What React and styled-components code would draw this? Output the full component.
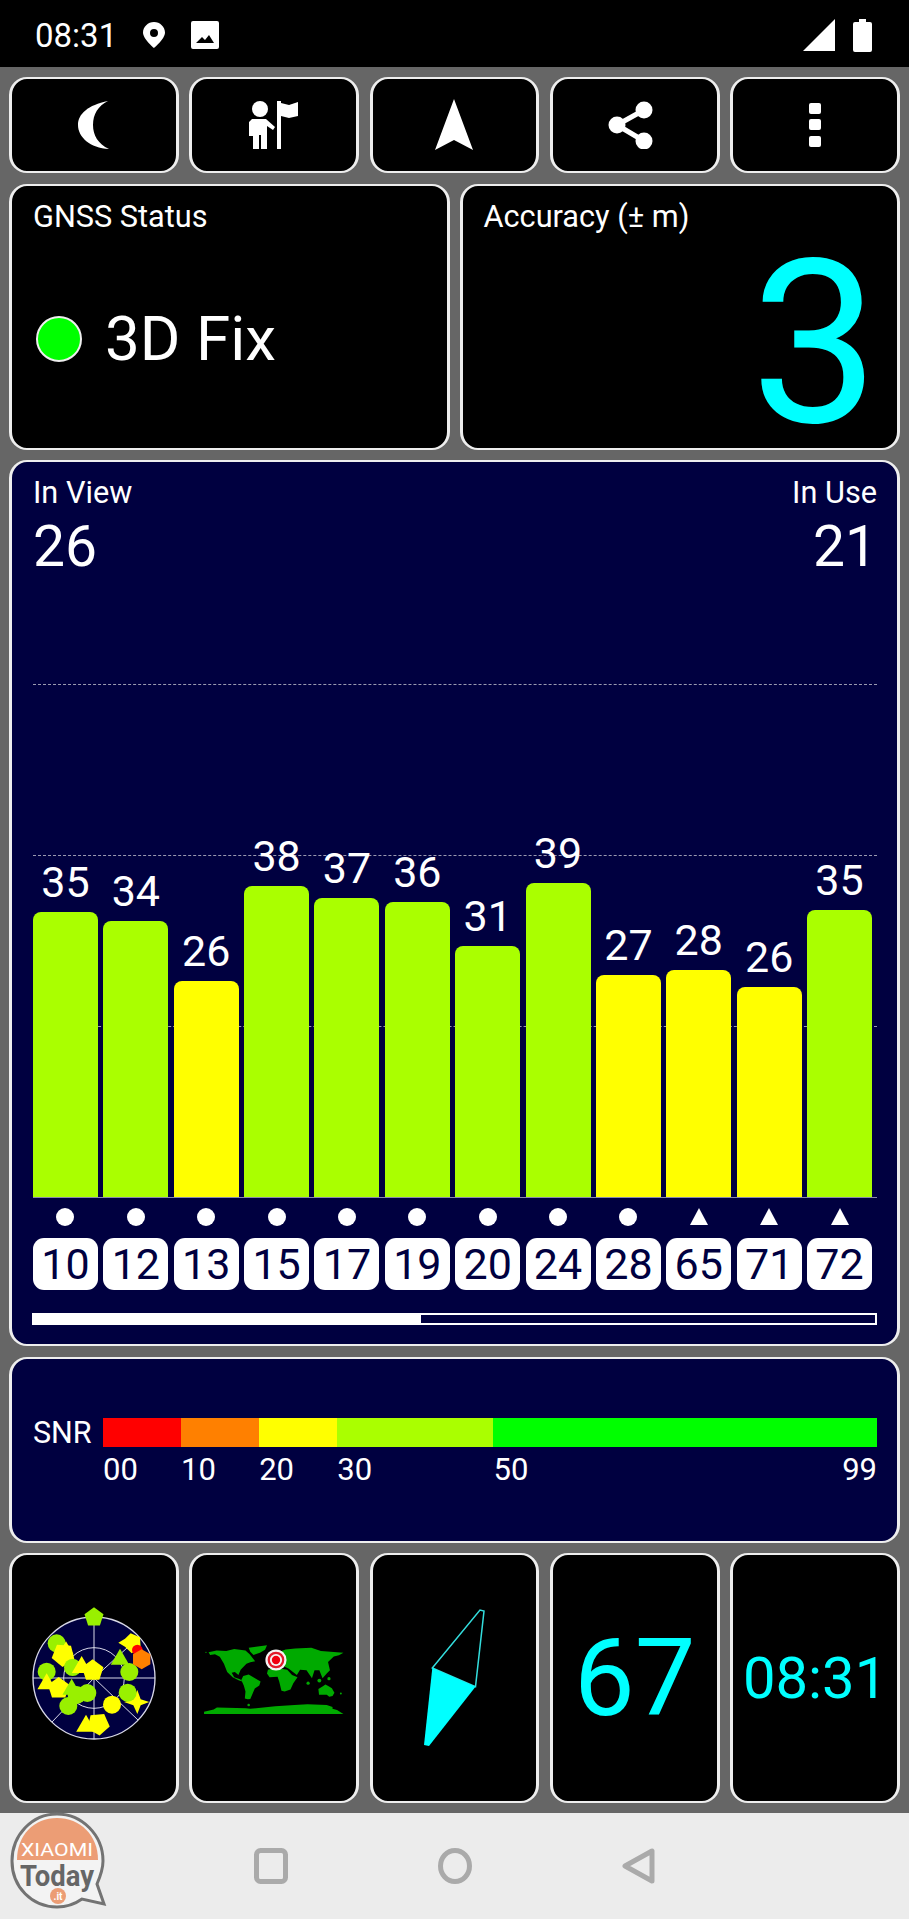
import React from "react";
import styled, { createGlobalStyle } from "styled-components";

const Global = createGlobalStyle`
  html, body { margin: 0; padding: 0; background: #666; }
  body { font-family: Roboto, "Liberation Sans", sans-serif; color: #fff; }
  * { box-sizing: border-box; }
`;

const Page = styled.div`
  width: 909px;
  height: 1919px;
  background: #666;
  display: flex;
  flex-direction: column;
  overflow: hidden;
  position: relative;
`;

const StatusBar = styled.header`
  height: 67px;
  background: #000;
  display: flex;
  align-items: center;
  padding: 3px 37px 0 35px;
`;
const Clock = styled.span`
  font-size: 33px;
  width: 108px;
`;
const StatusIcon = styled.svg`
  display: block;
  margin-right: ${(p) => p.$mr || 0}px;
  flex: none;
`;
const Spacer = styled.div`
  flex: 1;
`;

const Main = styled.main`
  flex: 1;
  display: flex;
  flex-direction: column;
  gap: 10.5px;
  padding: 10px 9px;
`;
const Row = styled.div`
  display: grid;
  grid-template-columns: repeat(${(p) => p.$cols}, 1fr);
  grid-template-rows: ${(p) => p.$h}px;
  gap: ${(p) => p.$gap}px;
  height: ${(p) => p.$h}px;
`;
const Panel = styled.section`
  border-style: solid;
  border-color: #eeeeee;
  border-width: 2px 3px;
  border-radius: 18px;
  background: ${(p) => (p.$navy ? "#000040" : "#000")};
  min-width: 0;
`;
const IconPanel = styled(Panel)`
  display: flex;
  align-items: center;
  justify-content: center;
`;
const TextTile = styled(IconPanel)`
  color: #00ffff;
  font-size: ${(p) => p.$size}px;
  line-height: 1;
`;

const CardLabel = styled.div`
  font-size: 30.7px;
  line-height: 34px;
`;
const StatusCard = styled(Panel)`
  padding: 14px 21px 0;
  display: flex;
  flex-direction: column;
`;
const FixRow = styled.div`
  display: flex;
  align-items: center;
  margin-top: 69px;
  margin-left: 3px;
`;
const FixDot = styled.span`
  width: 46px;
  height: 46px;
  border-radius: 50%;
  background: #00ff00;
  border: 2px solid #eee;
  flex: none;
`;
const FixText = styled.span`
  font-size: 62px;
  line-height: 72px;
  margin-left: 23px;
`;
const AccuracyCard = styled(StatusCard)`
  padding-right: 18px;
`;
const AccuracyValue = styled.div`
  color: #00ffff;
  font-size: 228px;
  line-height: 190px;
  text-align: right;
  margin-top: 15px;
`;

const ChartPanel = styled(Panel)`
  height: 886px;
  padding: 14px 20px 0 21px;
  display: flex;
  flex-direction: column;
`;
const ChartHead = styled.div`
  display: flex;
  justify-content: space-between;
`;
const HeadRight = styled.div`
  text-align: right;
`;
const HeadValue = styled.div`
  font-size: 57px;
  line-height: 60px;
  margin-top: 7px;
`;
const Plot = styled.div`
  position: relative;
  margin-top: 24px;
  height: 597px;
  border-bottom: 1px solid #8a8aa8;
`;
const GridLine = styled.div`
  position: absolute;
  left: 0;
  right: 0;
  top: ${(p) => p.$top}px;
  border-top: 1px dashed #9a9ab0;
`;
const Columns = styled.div`
  display: grid;
  grid-template-columns: repeat(12, 1fr);
  column-gap: 5.4px;
  padding-right: 5px;
`;
const BarColumns = styled(Columns)`
  position: relative;
  height: 100%;
  align-items: end;
`;
const BarCol = styled.div`
  display: flex;
  flex-direction: column;
  align-items: center;
`;
const BarValue = styled.div`
  font-size: 43px;
  line-height: 48px;
  margin-bottom: 6px;
`;
const Bar = styled.div`
  width: 100%;
  background: ${(p) => p.$color};
  border-radius: 8px 8px 0 0;
`;
const SymbolRow = styled(Columns)`
  margin-top: 10px;
  height: 18px;
  justify-items: center;
`;
const Dot = styled.span`
  width: 18px;
  height: 18px;
  border-radius: 50%;
  background: #fff;
`;
const Tri = styled.span`
  width: 0;
  height: 0;
  border-left: 9px solid transparent;
  border-right: 9px solid transparent;
  border-bottom: 17px solid #fff;
`;
const ChipRow = styled(Columns)`
  margin-top: 12px;
`;
const Chip = styled.div`
  height: 52px;
  border-radius: 11px;
  background: #fff;
  color: #000040;
  font-size: 43px;
  line-height: 52px;
  text-align: center;
`;
const Progress = styled.div`
  margin-top: 23px;
  margin-left: -1px;
  height: 12px;
  border: 2px solid #fff;
  background: #000040;
`;
const ProgressFill = styled.div`
  height: 100%;
  background: #fff;
`;

const SnrPanel = styled(Panel)`
  height: 186px;
  padding: 59px 20px 0 21px;
  display: grid;
  grid-template-columns: 70px 1fr;
  align-content: start;
`;
const SnrLabel = styled.div`
  font-size: 30.500px;
  line-height: 29px;
`;
const ScaleRow = styled.div`
  display: flex;
  height: ${(p) => p.$h}px;
`;
const Segment = styled.div`
  flex: ${(p) => p.$flex} 0 0;
  background: ${(p) => p.$color};
`;
const Tick = styled.div`
  flex: ${(p) => p.$flex} 0 0;
  display: flex;
  justify-content: space-between;
  font-size: 31px;
  line-height: 34px;
  padding-top: 6px;
`;

const ShareIcon = styled.svg`
  margin-right: 8px;
`;

const Nav = styled.nav`
  height: 106px;
  background: #ececec;
  display: flex;
  align-items: center;
  justify-content: center;
  gap: 150px;
`;
const LogoBadge = styled.svg`
  position: absolute;
  left: 8px;
  top: 1811px;
`;

const data = [
  [10, 35, 912, "c"], [12, 34, 921, "c"], [13, 26, 981, "c"], [15, 38, 886, "c"],
  [17, 37, 898, "c"], [19, 36, 902, "c"], [20, 31, 946, "c"], [24, 39, 883, "c"],
  [28, 27, 975, "c"], [65, 28, 970, "t"], [71, 26, 987, "t"], [72, 35, 910, "t"],
];

const Moon = () => (
  <svg width="32" height="50" viewBox="0 0 32 50">
    <path fill="#fff" d="M30 1C10 5 0 14 0 25c0 12 12 23 31 24-11-5-16-14-16-24 0-11 5-19 15-24z" />
  </svg>
);
const Explorer = () => (
  <svg width="50" height="50" viewBox="0 0 50 50">
    <g fill="#fff">
      <circle cx="11" cy="9" r="8" />
      <path d="M3 19h14l9 8-2 3-6-4v23h-6V35h-2v14H4V36H0V22z" />
      <rect x="28" y="1" width="4" height="48" />
      <path d="M32 3l8 2 9-3v14l-9 2-8-2z" />
    </g>
  </svg>
);
const Arrow = () => (
  <svg width="40" height="52" viewBox="0 0 40 52">
    <path fill="#fff" d="M20 0l19 51-19-10L1 51z" />
  </svg>
);
const Share = () => (
  <ShareIcon width="46" height="48" viewBox="0 0 46 48">
    <g fill="#fff" stroke="#fff">
      <circle cx="9" cy="24" r="8.5" stroke="none" />
      <circle cx="36" cy="9" r="8.5" stroke="none" />
      <circle cx="36" cy="40" r="8.5" stroke="none" />
      <path d="M9 24L36 9M9 24l27 16" strokeWidth="5" fill="none" />
    </g>
  </ShareIcon>
);
const More = () => (
  <svg width="12" height="44" viewBox="0 0 12 44">
    <g fill="#fff">
      <rect width="12" height="11" y="0" rx="2" />
      <rect width="12" height="11" y="16" rx="2" />
      <rect width="12" height="11" y="33" rx="2" />
    </g>
  </svg>
);

const radarLines = [[0, -61, 0, 61], [-61, 0, 61, 0], [0, 0, 45, -41], [0, 0, 44, 42], [0, 0, -42, 44]];
const poly = (cx, cy, r, n, rot = -90) =>
  Array.from({ length: n }, (_, i) => {
    const a = ((rot + (360 / n) * i) * Math.PI) / 180;
    return `${(cx + r * Math.cos(a)).toFixed(1)},${(cy + r * Math.sin(a)).toFixed(1)}`;
  }).join(" ");
const LIME = "#99f000";
const YEL = "#ffff00";
const Radar = () => (
  <svg width="150" height="160" viewBox="-3 -6 450 480">
    <circle cx="222" cy="234" r="183" fill="#000040" stroke="#d8d8e8" strokeWidth="4" />
    <circle cx="222" cy="234" r="91" fill="none" stroke="#d8d8e8" strokeWidth="3" />
    {radarLines.map((l, i) => (
      <line key={i} x1={222 + l[0] * 3} y1={234 + l[1] * 3} x2={222 + l[2] * 3} y2={234 + l[3] * 3} stroke="#d8d8e8" strokeWidth="3" />
    ))}
    <polygon points={poly(222, 52, 30, 5)} fill={LIME} />
    <circle cx="110" cy="130" r="27" fill={LIME} />
    <polygon points={poly(130, 165, 36, 5, -50)} fill={YEL} />
    <polygon points={poly(138, 150, 26, 3)} fill={YEL} />
    <circle cx="158" cy="202" r="26" fill={LIME} />
    <polygon points={poly(185, 202, 34, 3)} fill={YEL} />
    <polygon points={poly(218, 212, 34, 5)} fill={YEL} />
    <circle cx="80" cy="215" r="27" fill={LIME} />
    <polygon points={poly(80, 252, 32, 3)} fill={YEL} />
    <polygon points={poly(116, 265, 34, 5)} fill={YEL} />
    <polygon points={poly(155, 268, 32, 3)} fill={LIME} />
    <circle cx="170" cy="285" r="27" fill={LIME} />
    <circle cx="202" cy="279" r="27" fill={LIME} />
    <circle cx="145" cy="318" r="27" fill={LIME} />
    <circle cx="276" cy="314" r="27" fill={YEL} />
    <polygon points="352,270 362,298 388,306 362,316 352,342 340,316 312,306 340,298" fill={YEL} />
    <circle cx="323" cy="278" r="27" fill={LIME} />
    <circle cx="328" cy="216" r="27" fill={LIME} />
    <polygon points={poly(300, 178, 32, 3)} fill={LIME} />
    <polygon points="332,100 360,112 362,142 335,160 315,140 295,128 315,116" fill={YEL} />
    <circle cx="352" cy="150" r="16" fill="#ff0000" />
    <polygon points={poly(365, 178, 30, 6)} fill="#ff8000" />
    <polygon points={poly(198, 378, 34, 3)} fill={YEL} />
    <polygon points={poly(235, 372, 35, 5, -60)} fill={YEL} />
  </svg>
);

const WorldMap = () => (
  <svg width="170" height="120" viewBox="-1.500 -6 510 360">
    <g fill="#00aa00">
      <path d="M50 94L75 88 105 90 130 84 165 88 178 100 195 122 180 125 168 130 150 148 143 165 132 155 122 158 130 172 148 178 158 186 145 182 125 172 108 155 98 130 85 108 70 100 55 102Z" />
      <path d="M175 80L232 72 226 86 210 95 190 102 180 92Z" />
      <path d="M158 168L175 163 192 173 212 185 208 197 194 207 188 221 180 239 172 240 163 238 165 216 160 198 152 180Z" />
      <path d="M240 108L256 98 290 85 320 82 370 80 400 90 470 95 456 103 440 107 422 124 428 150 418 160 405 175 395 150 380 150 372 175 355 150 335 148 325 165 300 145 280 135 250 130Z" />
      <path d="M235 148L258 142 295 148 310 165 327 172 314 190 305 210 287 216 277 214 270 185 265 170 240 172 232 160Z" />
      <path d="M392 208L406 200 414 194 424 200 434 206 442 220 436 230 426 232 418 226 394 226Z" />
      <path d="M36 286V279L66 272 76 266 166 268 180 270 198 268 258 262 318 258 358 256 418 258 436 264 436 270 450 274 470 286Z" />
      <circle cx="462" cy="222" r="3" />
      <circle cx="42" cy="94" r="2" />
      <circle cx="175" cy="258" r="4" />
      <circle cx="360" cy="190" r="5" />
      <circle cx="395" cy="182" r="6" />
      <circle cx="425" cy="176" r="5" />
    </g>
    <circle cx="260" cy="118" r="33" fill="#f4f4f4" />
    <circle cx="260" cy="118" r="26" fill="#e21c2c" />
    <circle cx="260" cy="118" r="19" fill="#f4f4f4" />
    <circle cx="260" cy="118" r="13" fill="#f00010" />
  </svg>
);

const Compass = () => (
  <svg width="80" height="150" viewBox="0 0 80 150">
    <path d="M18.3 65L66 7l4 1-8.5 75.7z" fill="none" stroke="#33dddd" strokeWidth="1.5" />
    <path d="M18.3 65l43.2 18.7L15 143l-5-1z" fill="#00ffff" />
  </svg>
);

const Logo = () => (
  <LogoBadge width="100" height="100" viewBox="0 0 100 100">
    <path d="M49 3C24 3 4 24 4 50s20 46 45 46c10 0 18-3 25-8l22 5-7-20c3-7 6-15 6-23C95 24 74 3 49 3z" fill="#f3f3f3" stroke="#737373" strokeWidth="3" />
    <path d="M9 49C9 24 26 7 49 7s41 17 41 42z" fill="#ec9d75" />
    <text x="49" y="45" textAnchor="middle" fontFamily="Roboto, sans-serif" fontSize="19" fill="#fff" textLength="72" lengthAdjust="spacingAndGlyphs">XIAOMI</text>
    <text x="49" y="75" textAnchor="middle" fontFamily="Roboto, sans-serif" fontWeight="700" fontSize="30" fill="#666" textLength="74" lengthAdjust="spacingAndGlyphs">Today</text>
    <circle cx="50" cy="85" r="8" fill="#ec9d75" />
    <text x="50" y="89" textAnchor="middle" fontFamily="Roboto, sans-serif" fontWeight="700" fontSize="10" fill="#fff">.it</text>
  </LogoBadge>
);

export default function App() {
  return (
    <Page>
      <Global />
      <StatusBar>
        <Clock>08:31</Clock>
        <StatusIcon width="22" height="26" viewBox="0 0 22 26" $mr="26">
          <path fill="#fff" fillRule="evenodd" d="M11 0C5 0 0 5 0 10.500 0 17 11 26 11 26s11-9 11-15.500C22 5 17 0 11 0zm0 7a4 4 0 110 8 4 4 0 010-8z" />
        </StatusIcon>
        <StatusIcon width="28" height="28" viewBox="0 0 28 28">
          <path fill="#fff" fillRule="evenodd" d="M2 0h24a2 2 0 012 2v24a2 2 0 01-2 2H2a2 2 0 01-2-2V2a2 2 0 012-2zm3 22h18l-5-8-4 5-3-3z" />
        </StatusIcon>
        <Spacer />
        <StatusIcon width="32" height="32" viewBox="0 0 32 32" $mr="18">
          <path fill="#fff" d="M32 0v32H0z" />
        </StatusIcon>
        <StatusIcon width="19" height="33" viewBox="0 0 19 33">
          <path fill="#fff" d="M6 0h7v3h4a2 2 0 012 2v26a2 2 0 01-2 2H2a2 2 0 01-2-2V5a2 2 0 012-2h4z" />
        </StatusIcon>
      </StatusBar>
      <Main>
        <Row $cols={5} $gap={10.5} $h={96}>
          <IconPanel><Moon /></IconPanel>
          <IconPanel><Explorer /></IconPanel>
          <IconPanel><Arrow /></IconPanel>
          <IconPanel><Share /></IconPanel>
          <IconPanel><More /></IconPanel>
        </Row>
        <Row $cols={2} $gap={10} $h={266}>
          <StatusCard>
            <CardLabel>GNSS Status</CardLabel>
            <FixRow>
              <FixDot />
              <FixText>3D Fix</FixText>
            </FixRow>
          </StatusCard>
          <AccuracyCard>
            <CardLabel>Accuracy (± m)</CardLabel>
            <AccuracyValue>3</AccuracyValue>
          </AccuracyCard>
        </Row>
        <ChartPanel $navy>
          <ChartHead>
            <div>
              <CardLabel>In View</CardLabel>
              <HeadValue>26</HeadValue>
            </div>
            <HeadRight>
              <CardLabel>In Use</CardLabel>
              <HeadValue>21</HeadValue>
            </HeadRight>
          </ChartHead>
          <Plot>
            <GridLine $top={83} />
            <GridLine $top={254} />
            <GridLine $top={425} />
            <BarColumns>
              {data.map(([id, v, top]) => (
                <BarCol key={id}>
                  <BarValue>{v}</BarValue>
                  <Bar $color={v >= 30 ? "#aaff00" : "#ffff00"} style={{ height: 1197 - top }} />
                </BarCol>
              ))}
            </BarColumns>
          </Plot>
          <SymbolRow>
            {data.map(([id, , , s]) => (s === "c" ? <Dot key={id} /> : <Tri key={id} />))}
          </SymbolRow>
          <ChipRow>
            {data.map(([id]) => (
              <Chip key={id}>{id}</Chip>
            ))}
          </ChipRow>
          <Progress>
            <ProgressFill style={{ width: "46%" }} />
          </Progress>
        </ChartPanel>
        <SnrPanel $navy>
          <SnrLabel>SNR</SnrLabel>
          <ScaleRow $h={29}>
            <Segment $flex={78} $color="#ff0000" />
            <Segment $flex={78} $color="#ff8000" />
            <Segment $flex={78} $color="#ffff00" />
            <Segment $flex={156} $color="#aaff00" />
            <Segment $flex={383} $color="#00ff00" />
          </ScaleRow>
          <span />
          <ScaleRow $h={40}>
            <Tick $flex={78}>00</Tick>
            <Tick $flex={78}>10</Tick>
            <Tick $flex={78}>20</Tick>
            <Tick $flex={156}>30</Tick>
            <Tick $flex={383}><span>50</span><span>99</span></Tick>
          </ScaleRow>
        </SnrPanel>
        <Row $cols={5} $gap={10.5} $h={250}>
          <IconPanel><Radar /></IconPanel>
          <IconPanel><WorldMap /></IconPanel>
          <IconPanel><Compass /></IconPanel>
          <TextTile $size={108}>67</TextTile>
          <TextTile $size={58}>08:31</TextTile>
        </Row>
      </Main>
      <Nav>
        <svg width="34" height="36" viewBox="0 0 34 36">
          <rect x="2.500" y="2.500" width="29" height="31" rx="4" fill="none" stroke="#aaa" strokeWidth="5" />
        </svg>
        <svg width="34" height="36" viewBox="0 0 34 36">
          <ellipse cx="17" cy="18" rx="14.500" ry="15.500" fill="none" stroke="#aaa" strokeWidth="5" />
        </svg>
        <svg width="34" height="36" viewBox="0 0 34 36">
          <path d="M30 3v30L3 18z" fill="none" stroke="#aaa" strokeWidth="5" strokeLinejoin="round" />
        </svg>
      </Nav>
      <Logo />
    </Page>
  );
}
